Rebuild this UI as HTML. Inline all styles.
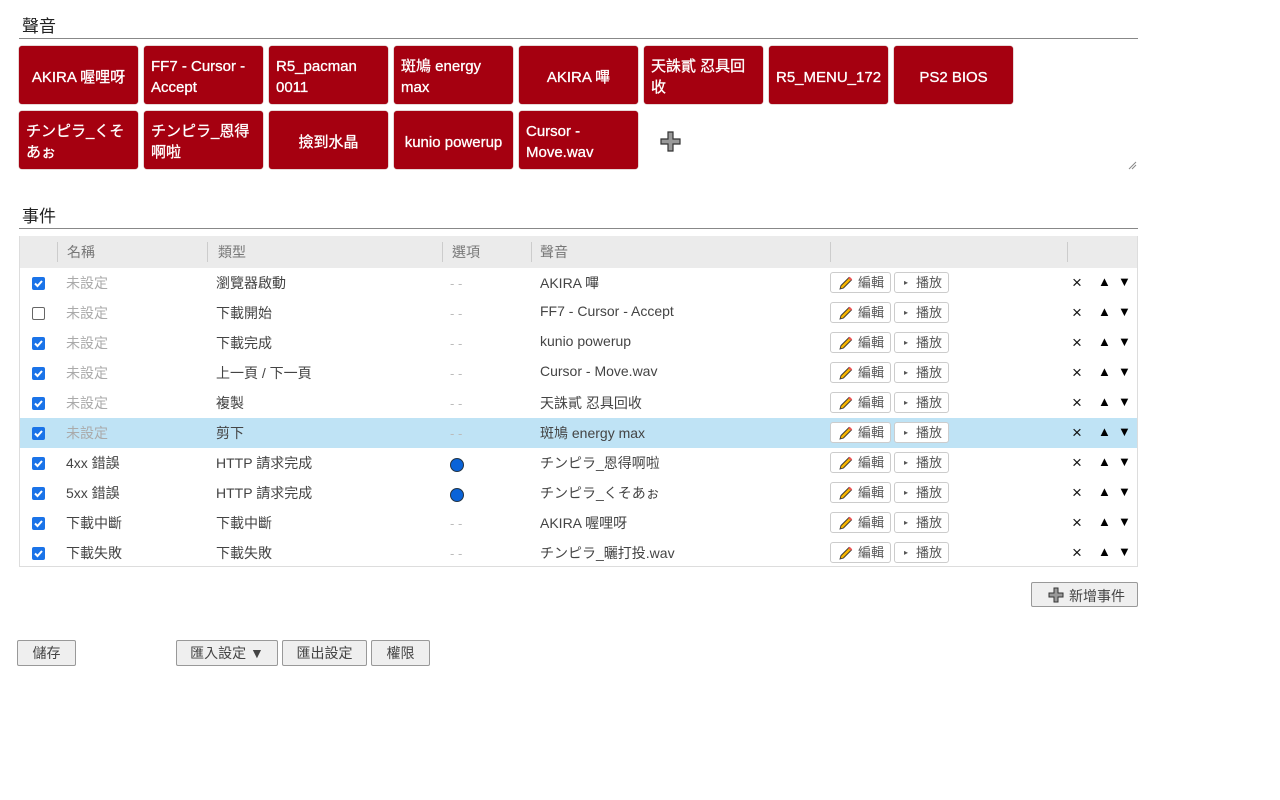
<!DOCTYPE html>
<html><head><meta charset="utf-8">
<style>
*{box-sizing:border-box;margin:0;padding:0}
body{width:1280px;height:800px;background:#fff;font-family:"Liberation Sans","Noto Sans CJK TC",sans-serif;color:#333;position:relative;overflow:hidden}
.abs{position:absolute}
h2{position:absolute;left:19px;width:1119px;font-size:17px;font-weight:normal;color:#222;border-bottom:1px solid #888;padding-left:3px}
.tile{position:absolute;width:119px;height:58px;background:#a50010;border-radius:3px;color:#fff;font-size:15px;line-height:21px;display:flex;align-items:center;justify-content:center;padding:4px 7px 0;box-shadow:0 0 1px #600;-webkit-text-stroke:0.3px #fff}
.tile span{display:block;width:100%}
.tile.c span{text-align:center}
.row{position:absolute;left:20px;width:1117px;height:30px;font-size:14px;color:#444}
.row>*{position:absolute;top:5px}
.row>.cb{left:12px;top:9px;width:13px;height:13px;border-radius:2px;background:#1a73e8}
.cb svg{position:absolute;left:1px;top:1px}
.row>.cb.off{background:#fff;border:1px solid #666}
.row>.btn{position:absolute;top:4px;height:21px;border:1px solid #ccc;border-radius:3px;background:#fff;font-size:13px;color:#555;line-height:19px}
.row>.dot{width:14px;height:14px;border-radius:50%;background:#0a63d8;border:1px solid #234;top:10px;left:430px}
.fb{position:absolute;top:640px;height:26px;border:1px solid #999;background:#efefef;font-size:14px;color:#444;text-align:center;line-height:24px;border-radius:2px}
</style></head><body>
<h2 style="top:12px;height:27px">聲音</h2>
<div class="tile c" style="left:19px;top:46px"><span>AKIRA 喔哩呀</span></div>
<div class="tile" style="left:144px;top:46px"><span>FF7 - Cursor - Accept</span></div>
<div class="tile" style="left:269px;top:46px"><span>R5_pacman 0011</span></div>
<div class="tile" style="left:394px;top:46px"><span>斑鳩 energy max</span></div>
<div class="tile c" style="left:519px;top:46px"><span>AKIRA 嗶</span></div>
<div class="tile" style="left:644px;top:46px"><span>天誅貳 忍具回收</span></div>
<div class="tile c" style="left:769px;top:46px"><span>R5_MENU_172</span></div>
<div class="tile c" style="left:894px;top:46px"><span>PS2 BIOS</span></div>
<div class="tile" style="left:19px;top:111px"><span>チンピラ_くそあぉ</span></div>
<div class="tile" style="left:144px;top:111px"><span>チンピラ_恩得啊啦</span></div>
<div class="tile c" style="left:269px;top:111px"><span>撿到水晶</span></div>
<div class="tile c" style="left:394px;top:111px"><span>kunio powerup</span></div>
<div class="tile" style="left:519px;top:111px"><span>Cursor - Move.wav</span></div>
<svg class="abs" style="left:660px;top:131px" width="21" height="21" viewBox="0 0 21 21"><path d="M8 1h5v7h7v5h-7v7H8v-7H1V8h7z" fill="#999" stroke="#333" stroke-width="1.2"/></svg>
<svg class="abs" style="left:1128px;top:161px" width="9" height="9"><path d="M1 8L8 1M4 8L8 4" stroke="#888"/></svg>

<h2 style="top:202px;height:27px">事件</h2>
<div class="abs" style="left:19px;top:236px;width:1119px;height:331px;border:1px solid #ddd"></div>
<div class="abs" style="left:20px;top:236px;width:1117px;height:32px;background:#ebebeb;font-size:14px;color:#777">
<span class="abs" style="left:37px;top:6px;height:20px;border-left:1px solid #ccc"></span>
<span class="abs" style="left:47px;top:6px">名稱</span>
<span class="abs" style="left:187px;top:6px;height:20px;border-left:1px solid #ccc"></span>
<span class="abs" style="left:198px;top:6px">類型</span>
<span class="abs" style="left:422px;top:6px;height:20px;border-left:1px solid #ccc"></span>
<span class="abs" style="left:432px;top:6px">選項</span>
<span class="abs" style="left:511px;top:6px;height:20px;border-left:1px solid #ccc"></span>
<span class="abs" style="left:520px;top:6px">聲音</span>
<span class="abs" style="left:810px;top:6px;height:20px;border-left:1px solid #ccc"></span>
<span class="abs" style="left:1047px;top:6px;height:20px;border-left:1px solid #ccc"></span>
</div>
<div id="rows"></div>
<script>
var d=[[1,'未設定','瀏覽器啟動',0,'AKIRA 嗶'],[0,'未設定','下載開始',0,'FF7 - Cursor - Accept'],[1,'未設定','下載完成',0,'kunio powerup'],[1,'未設定','上一頁 / 下一頁',0,'Cursor - Move.wav'],[1,'未設定','複製',0,'天誅貳 忍具回收'],[1,'未設定','剪下',0,'斑鳩 energy max'],[1,'4xx 錯誤','HTTP 請求完成',1,'チンピラ_恩得啊啦'],[1,'5xx 錯誤','HTTP 請求完成',1,'チンピラ_くそあぉ'],[1,'下載中斷','下載中斷',0,'AKIRA 喔哩呀'],[1,'下載失敗','下載失敗',0,'チンピラ_曬打投.wav']];
var h='';
d.forEach(function(r,i){
var top=268+i*30;
h+='<div class="row" style="top:'+top+'px;'+(i==5?'background:#bfe3f5;':'')+'">';
h+=r[0]?'<span class="cb"><svg width="11" height="11"><path d="M2 5.5l2.5 2.5L9 3" stroke="#fff" stroke-width="2" fill="none"/></svg></span>':'<span class="cb off"></span>';
h+='<span style="left:46px;color:'+(r[1]=='未設定'?'#aaa':'#444')+'">'+r[1]+'</span>';
h+='<span style="left:196px">'+r[2]+'</span>';
h+=r[3]?'<span class="dot"></span>':'<span style="left:430px;top:8px;color:#bbb;font-size:13px">- -</span>';
h+='<span style="left:520px">'+r[4]+'</span>';
h+='<span class="btn" style="left:810px;width:61px"><svg style="position:absolute;left:7px;top:3px" width="15" height="15" viewBox="0 0 15 15"><path d="M2 13l1-3.5L11 1.5l2.5 2.5L5.5 12z" fill="#f5b400" stroke="#333" stroke-width="0.9"/><path d="M11 1.5l2.5 2.5" stroke="#e55" stroke-width="2"/></svg><span style="position:absolute;left:27px">編輯</span></span>';
h+='<span class="btn" style="left:874px;width:55px"><span style="position:absolute;left:9px;font-size:8px">▸</span><span style="position:absolute;left:21px">播放</span></span>';
h+='<span style="left:1052px;top:5px;font-size:17px;color:#111">×</span><span style="left:1078px;top:6px;font-size:13px;color:#000">▲</span><span style="left:1098px;top:6px;font-size:13px;color:#000">▼</span>';
h+='</div>';});
document.getElementById('rows').innerHTML=h;
</script>
<div class="abs" style="left:1031px;top:582px;width:107px;height:25px;border:1px solid #999;background:#efefef;border-radius:2px;font-size:14px;color:#444">
<svg class="abs" style="left:16px;top:4px" width="16" height="16" viewBox="0 0 16 16"><path d="M6 1h4v5h5v4h-5v5H6v-5H1V6h5z" fill="#999" stroke="#333"/></svg>
<span class="abs" style="left:37px;top:3px">新增事件</span></div>
<div class="fb" style="left:17px;width:59px">儲存</div>
<div class="fb" style="left:176px;width:102px">匯入設定 ▼</div>
<div class="fb" style="left:282px;width:85px">匯出設定</div>
<div class="fb" style="left:371px;width:59px">權限</div>
</body></html>
